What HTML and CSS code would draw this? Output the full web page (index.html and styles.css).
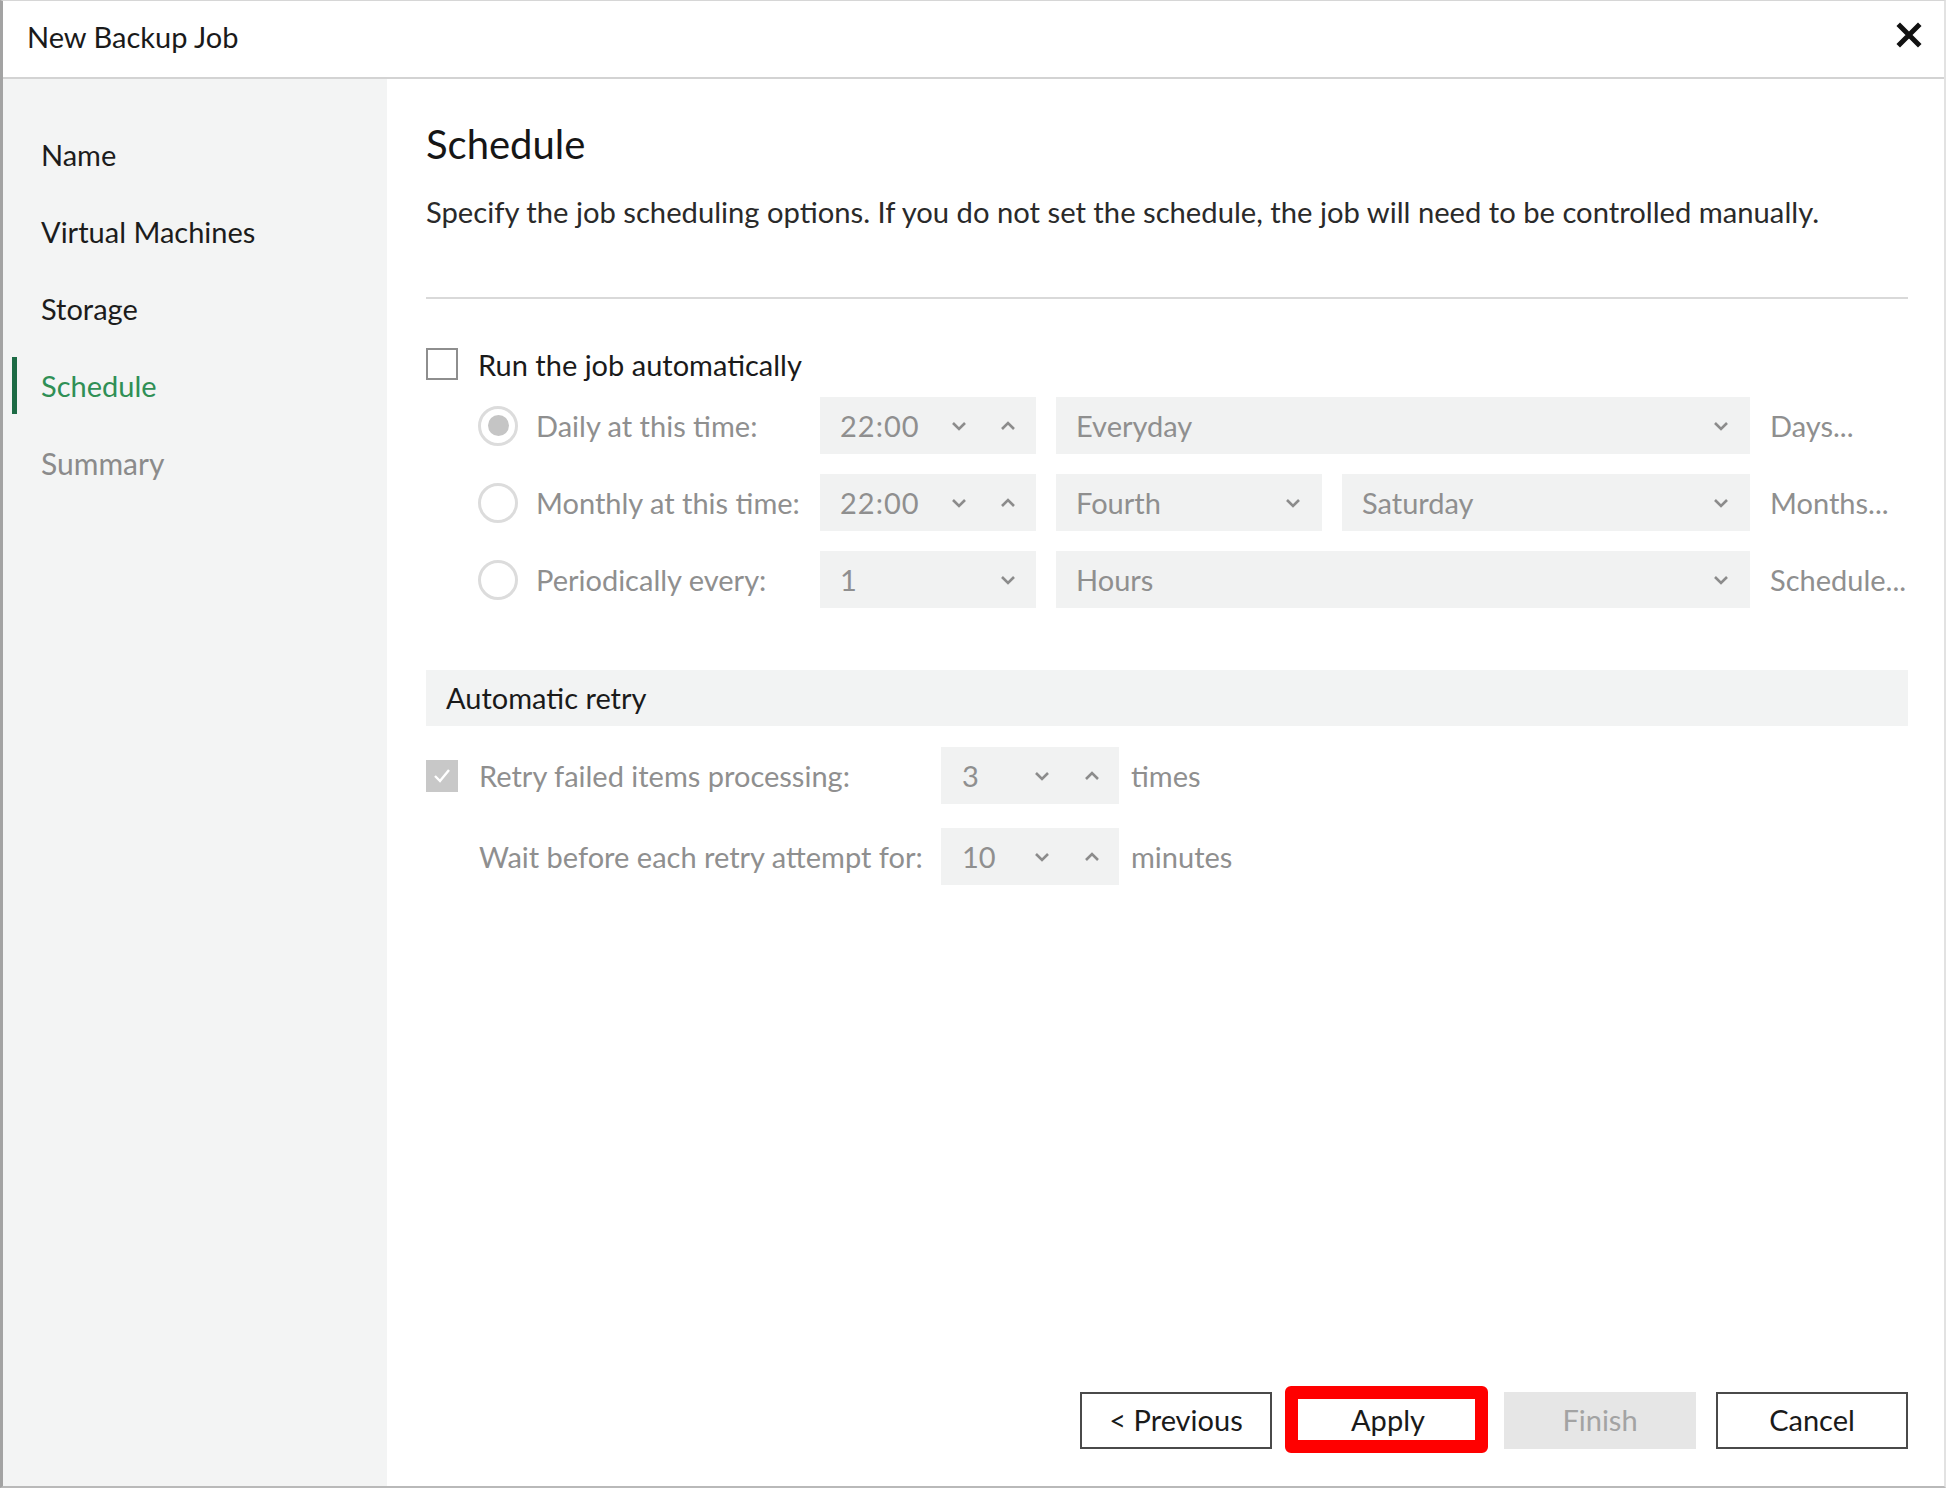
FILE: index.html
```html
<!DOCTYPE html>
<html lang="en">
<head>
<meta charset="utf-8">
<title>New Backup Job</title>
<link rel="stylesheet" href="styles.css">
</head>
<body>
<div class="window">
  <header class="titlebar">
    <span class="title">New Backup Job</span>
    <button class="close" aria-label="Close">
      <svg width="26" height="26" viewBox="0 0 26 26"><path d="M4 4 L22 22 M22 4 L4 22" stroke="#111" stroke-width="5" stroke-linecap="square"/></svg>
    </button>
  </header>

  <div class="content">
    <nav class="steps">
      <div class="step"><span class="marker"></span><span>Name</span></div>
      <div class="step"><span class="marker"></span><span>Virtual Machines</span></div>
      <div class="step"><span class="marker"></span><span>Storage</span></div>
      <div class="step active"><span class="marker"></span><span>Schedule</span></div>
      <div class="step pending"><span class="marker"></span><span>Summary</span></div>
    </nav>

    <main class="page">
      <h1 class="heading">Schedule</h1>
      <p class="desc">Specify the job scheduling options. If you do not set the schedule, the job will need to be controlled manually.</p>
      <hr class="sep">

      <label class="check-row">
        <span class="checkbox"></span>
        <span>Run the job automatically</span>
      </label>

      <div class="sched">
        <div class="sched-row">
          <div class="opt"><span class="radio on"></span><span>Daily at this time:</span></div>
          <div class="field spin time">
            <span class="val">22:00</span>
            <span class="chev down"><svg width="16" height="10" viewBox="0 0 16 10"><path d="M2 2 L8 8 L14 2" fill="none" stroke="#8c8c8c" stroke-width="2.6"/></svg></span>
            <span class="chev up"><svg width="16" height="10" viewBox="0 0 16 10"><path d="M2 8 L8 2 L14 8" fill="none" stroke="#8c8c8c" stroke-width="2.6"/></svg></span>
          </div>
          <div class="field combo wide">
            <span class="val">Everyday</span>
            <span class="chev"><svg width="16" height="10" viewBox="0 0 16 10"><path d="M2 2 L8 8 L14 2" fill="none" stroke="#8c8c8c" stroke-width="2.6"/></svg></span>
          </div>
          <span class="link">Days...</span>
        </div>

        <div class="sched-row">
          <div class="opt"><span class="radio"></span><span>Monthly at this time:</span></div>
          <div class="field spin time">
            <span class="val">22:00</span>
            <span class="chev down"><svg width="16" height="10" viewBox="0 0 16 10"><path d="M2 2 L8 8 L14 2" fill="none" stroke="#8c8c8c" stroke-width="2.6"/></svg></span>
            <span class="chev up"><svg width="16" height="10" viewBox="0 0 16 10"><path d="M2 8 L8 2 L14 8" fill="none" stroke="#8c8c8c" stroke-width="2.6"/></svg></span>
          </div>
          <div class="combo-pair">
            <div class="field combo week">
              <span class="val">Fourth</span>
              <span class="chev"><svg width="16" height="10" viewBox="0 0 16 10"><path d="M2 2 L8 8 L14 2" fill="none" stroke="#8c8c8c" stroke-width="2.6"/></svg></span>
            </div>
            <div class="field combo day">
              <span class="val">Saturday</span>
              <span class="chev"><svg width="16" height="10" viewBox="0 0 16 10"><path d="M2 2 L8 8 L14 2" fill="none" stroke="#8c8c8c" stroke-width="2.6"/></svg></span>
            </div>
          </div>
          <span class="link">Months...</span>
        </div>

        <div class="sched-row">
          <div class="opt"><span class="radio"></span><span>Periodically every:</span></div>
          <div class="field combo time">
            <span class="val">1</span>
            <span class="chev"><svg width="16" height="10" viewBox="0 0 16 10"><path d="M2 2 L8 8 L14 2" fill="none" stroke="#8c8c8c" stroke-width="2.6"/></svg></span>
          </div>
          <div class="field combo wide">
            <span class="val">Hours</span>
            <span class="chev"><svg width="16" height="10" viewBox="0 0 16 10"><path d="M2 2 L8 8 L14 2" fill="none" stroke="#8c8c8c" stroke-width="2.6"/></svg></span>
          </div>
          <span class="link">Schedule...</span>
        </div>
      </div>

      <div class="group-head">Automatic retry</div>

      <div class="retry">
        <div class="retry-row">
          <div class="retry-label"><span class="checkbox checked"><svg width="22" height="22" viewBox="0 0 22 22"><path d="M4 11 L9 16 L18 5" fill="none" stroke="#fff" stroke-width="2.4"/></svg></span><span>Retry failed items processing:</span></div>
          <div class="field spin small">
            <span class="val">3</span>
            <span class="chev down"><svg width="16" height="10" viewBox="0 0 16 10"><path d="M2 2 L8 8 L14 2" fill="none" stroke="#8c8c8c" stroke-width="2.6"/></svg></span>
            <span class="chev up"><svg width="16" height="10" viewBox="0 0 16 10"><path d="M2 8 L8 2 L14 8" fill="none" stroke="#8c8c8c" stroke-width="2.6"/></svg></span>
          </div>
          <span class="unit">times</span>
        </div>
        <div class="retry-row">
          <div class="retry-label indent"><span>Wait before each retry attempt for:</span></div>
          <div class="field spin small">
            <span class="val">10</span>
            <span class="chev down"><svg width="16" height="10" viewBox="0 0 16 10"><path d="M2 2 L8 8 L14 2" fill="none" stroke="#8c8c8c" stroke-width="2.6"/></svg></span>
            <span class="chev up"><svg width="16" height="10" viewBox="0 0 16 10"><path d="M2 8 L8 2 L14 8" fill="none" stroke="#8c8c8c" stroke-width="2.6"/></svg></span>
          </div>
          <span class="unit">minutes</span>
        </div>
      </div>

      <footer class="actions">
        <button class="btn">&lt; Previous</button>
        <button class="btn btn-apply">Apply</button>
        <button class="btn btn-disabled">Finish</button>
        <button class="btn">Cancel</button>
      </footer>
    </main>
  </div>
</div>
</body>
</html>
```

FILE: styles.css
```css
* { box-sizing: border-box; }

html, body {
  margin: 0;
  padding: 0;
  background: #ffffff;
}

body {
  font-family: Lato, "Open Sans", "Noto Sans", sans-serif;
  color: #1b1b1b;
}

.window {
  width: 1946px;
  height: 1488px;
  display: flex;
  flex-direction: column;
  border-top: 1px solid #d6d6d6;
  border-right: 2px solid #e2e2e2;
  border-bottom: 2px solid #b9b9b9;
  border-left: 3px solid #a3a3a3;
  background: #fff;
}

/* title bar */
.titlebar {
  height: 78px;
  flex: none;
  display: flex;
  align-items: center;
  justify-content: space-between;
  padding: 0 22px 0 24px;
  border-bottom: 2px solid #d3d3d3;
}

.title {
  font-size: 29px;
  color: #1a1a1a;
  margin-top: -6px;
}

.close {
  border: 0;
  background: transparent;
  padding: 0;
  width: 26px;
  height: 26px;
  margin-top: -8px;
  display: flex;
}

/* body */
.content {
  flex: 1;
  display: flex;
  min-height: 0;
}

.steps {
  width: 384px;
  flex: none;
  background: #f3f4f4;
  padding-top: 37px;
}

.step {
  height: 77px;
  display: flex;
  align-items: center;
  gap: 24px;
  padding-left: 9px;
  font-size: 29px;
  color: #1c1c1c;
}

.step .marker {
  width: 5px;
  height: 57px;
  flex: none;
}

.step.active { color: #2f8f55; }
.step.active .marker { background: #1d6b45; }
.step.pending { color: #8b8b8b; font-size: 30px; }

/* page */
.page {
  flex: 1;
  display: flex;
  flex-direction: column;
  padding: 40px 36px 37px 39px;
}

.heading {
  margin: 0;
  font-size: 40px;
  line-height: 50px;
  font-weight: 400;
  color: #161616;
}

.desc {
  margin: 25px 0 0;
  font-size: 29.2px;
  line-height: 36px;
  color: #2a2a2a;
}

.sep {
  margin: 67px 0 0;
  border: 0;
  height: 2px;
  background: #d9d9d9;
}

.check-row {
  margin-top: 40px;
  height: 50px;
  display: flex;
  align-items: center;
  gap: 20px;
  font-size: 29px;
  color: #1a1a1a;
}

.checkbox {
  width: 32px;
  height: 32px;
  flex: none;
  border: 2px solid #8e8e8e;
  background: #fff;
  display: flex;
  align-items: center;
  justify-content: center;
}

.checkbox.checked {
  border: 0;
  background: #c8c8c8;
}

/* schedule options */
.sched {
  margin-top: 8px;
  padding-left: 52px;
  display: flex;
  flex-direction: column;
  gap: 20px;
  color: #8f8f8f;
  font-size: 29px;
}

.sched-row {
  height: 57px;
  display: flex;
  align-items: center;
}

.opt {
  width: 342px;
  flex: none;
  display: flex;
  align-items: center;
  gap: 18px;
}

.radio {
  width: 40px;
  height: 40px;
  flex: none;
  border-radius: 50%;
  border: 3px solid #dcdcdc;
  display: flex;
  align-items: center;
  justify-content: center;
}

.radio.on::after {
  content: "";
  width: 21px;
  height: 21px;
  border-radius: 50%;
  background: #c5c5c5;
}

.field {
  height: 57px;
  flex: none;
  background: #f1f2f2;
  display: flex;
  align-items: center;
  padding-left: 20px;
  color: #8f8f8f;
  font-size: 29px;
}

.field .val { flex: 1; }

.spin.time .val { letter-spacing: 1px; }

.chev {
  width: 16px;
  height: 10px;
  display: flex;
}

.spin.time { width: 216px; }
.spin.time .down { margin-right: 33px; }
.spin.time .up { margin-right: 20px; }

.combo .chev { margin-right: 21px; }
.combo.time { width: 216px; }
.combo.time .chev { margin-right: 20px; }

.combo.wide { width: 694px; margin-left: 20px; }

.combo-pair {
  width: 694px;
  margin-left: 20px;
  display: flex;
  gap: 20px;
}

.combo.week { width: 266px; }
.combo.day { flex: 1; }

.link {
  margin-left: 20px;
  color: #8f8f8f;
  font-size: 29px;
  white-space: nowrap;
}

/* retry group */
.group-head {
  margin-top: 62px;
  height: 56px;
  background: #f2f3f3;
  display: flex;
  align-items: center;
  padding-left: 20px;
  padding-bottom: 2px;
  font-size: 29px;
  color: #1a1a1a;
}

.retry {
  margin-top: 21px;
  display: flex;
  flex-direction: column;
  gap: 24px;
  color: #8f8f8f;
  font-size: 29px;
}

.retry-row {
  height: 57px;
  display: flex;
  align-items: center;
}

.retry-label {
  width: 515px;
  flex: none;
  display: flex;
  align-items: center;
  gap: 21px;
}

.retry-label.indent { padding-left: 53px; }

.spin.small { width: 178px; padding-left: 21px; }
.spin.small .down { margin-right: 34px; }
.spin.small .up { margin-right: 19px; }

.unit {
  margin-left: 12px;
  color: #8f8f8f;
}

/* footer buttons */
.actions {
  margin-top: auto;
  display: flex;
  justify-content: flex-end;
  gap: 20px;
}

.btn {
  width: 192px;
  height: 57px;
  background: #fff;
  border: 2px solid #4a4a4a;
  font-family: inherit;
  font-size: 29px;
  color: #1a1a1a;
  padding: 0 0 3px;
}

.btn-disabled {
  background: #e6e6e6;
  border-color: #e6e6e6;
  color: #a3a3a3;
}

.btn-apply {
  position: relative;
  border-color: #fff;
}

/* red highlight frame drawn over the Apply button */
.btn-apply::after {
  content: "";
  position: absolute;
  left: -9px;
  right: -6px;
  top: -8px;
  bottom: -6px;
  border: 13px solid #ff0000;
  border-radius: 6px;
}
```
